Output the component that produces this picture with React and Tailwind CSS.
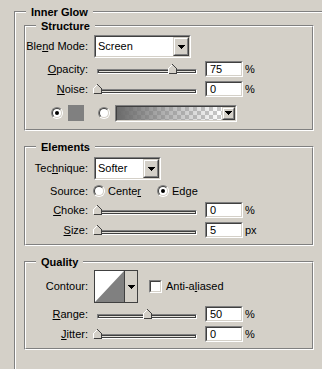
// Photoshop "Inner Glow" layer style panel (Win2000 look)

function Arrow() {
    return (
        <svg width="7" height="4" viewBox="0 0 7 4" shapeRendering="crispEdges">
            <rect x="0" y="0" width="7" height="1" fill="#000" />
            <rect x="1" y="1" width="5" height="1" fill="#000" />
            <rect x="2" y="2" width="3" height="1" fill="#000" />
            <rect x="3" y="3" width="1" height="1" fill="#000" />
        </svg>
    )
}

// sunken 3d field
function Sunken({ className, inner = 'bg-white', children }) {
    return (
        <div className={`border border-t-[#808080] border-l-[#808080] border-b-white border-r-white ${className}`}>
            <div className={`flex h-full w-full border border-t-[#404040] border-l-[#404040] border-b-[#d4d0c8] border-r-[#d4d0c8] ${inner}`}>
                {children}
            </div>
        </div>
    )
}

// raised dropdown button
function DropButton({ className }) {
    return (
        <div className={`border border-t-[#d4d0c8] border-l-[#d4d0c8] border-b-[#404040] border-r-[#404040] ${className}`}>
            <div className="flex h-full w-full items-center justify-center border border-t-white border-l-white border-b-[#808080] border-r-[#808080] bg-[#d4d0c8]">
                <Arrow />
            </div>
        </div>
    )
}

function Select({ value, width }) {
    return (
        <Sunken className={`h-[23px] ${width}`}>
            <div className="flex flex-1 items-center pl-[2px]">{value}</div>
            <DropButton className="h-full w-[16px]" />
        </Sunken>
    )
}

function Radio({ checked }) {
    return (
        <div className="h-[12px] w-[12px] shrink-0 rounded-full border border-t-[#808080] border-l-[#808080] border-b-white border-r-white">
            <div className="flex h-full w-full items-center justify-center rounded-full border border-t-[#404040] border-l-[#404040] border-b-[#d4d0c8] border-r-[#d4d0c8] bg-white">
                {checked && <div className="h-[4px] w-[4px] rounded-full bg-black" />}
            </div>
        </div>
    )
}

function Thumb() {
    return (
        <svg width="9" height="10" viewBox="0 0 9 10" shapeRendering="crispEdges">
            <polygon points="4.5,0.5 8.5,4.5 8.5,9.5 0.5,9.5 0.5,4.5" fill="#d4d0c8" />
            <polyline points="0.5,9 0.5,4.5 4.5,0.5" fill="none" stroke="#fff" />
            <polyline points="4.5,0.5 8.5,4.5 8.5,9.5 0.5,9.5" fill="none" stroke="#404040" />
        </svg>
    )
}

function Slider({ value }) {
    return (
        <div className="relative ml-[3px] h-[16px] w-[100px]">
            <div className="mt-[8px] h-[5px] border border-t-[#808080] border-l-[#808080] border-b-white border-r-white">
                <div className="h-full border border-t-[#404040] border-l-[#404040] border-b-[#404040] border-r-[#404040] bg-[#e4e2dc]" />
            </div>
            <div className="absolute top-[3px]" style={{ left: value - 4 }}>
                <Thumb />
            </div>
        </div>
    )
}

function Label({ children }) {
    return <div className="w-[62px] shrink-0 text-right">{children}</div>
}

function SliderRow({ label, value, slider, unit, className }) {
    return (
        <div className={`flex h-[16px] items-center ${className}`}>
            <Label>{label}</Label>
            <div className="ml-[6px] flex items-center">
                <Slider value={slider} />
                <Sunken className="ml-[8px] h-[16px] w-[38px]">
                    <div className="flex items-center pl-[3px]">{value}</div>
                </Sunken>
                <span className="ml-[2px]">{unit}</span>
            </div>
        </div>
    )
}

function Group({ title, className, children }) {
    return (
        <div className={`relative border border-t-[#808080] border-l-[#808080] border-b-white border-r-white ${className}`}>
            <div className="h-full w-full border border-t-white border-l-white border-b-[#808080] border-r-[#808080]">
                {children}
            </div>
            <span className="absolute left-[11px] top-[-6px] bg-[#d4d0c8] px-[5px] font-bold">{title}</span>
        </div>
    )
}

export default function App() {
    return (
        <div className="h-[369px] w-[322px] overflow-hidden bg-[#d4d0c8] font-['Liberation_Sans',Arial,sans-serif] text-[11px] leading-[13px] text-black">
            <div className="ml-[14px] mt-[11px] h-[400px] w-[340px] border-l border-t border-l-[#808080] border-t-[#808080]">
                <div className="relative h-full w-full border-l border-t border-l-white border-t-white">
                    <span className="absolute left-[10px] top-[-7px] bg-[#d4d0c8] px-[5px] font-bold">Inner Glow</span>

                    <div className="ml-[8px] pt-[12px]">

                        {/* Structure */}
                        <Group title="Structure" className="h-[106px] w-[290px]">
                            <div className="mt-[8px] flex items-center">
                                <Label>Ble<u>n</u>d Mode:</Label>
                                <div className="ml-[6px]">
                                    <Select value="Screen" width="w-[97px]" />
                                </div>
                            </div>
                            <SliderRow className="mt-[3px]" label={<><u>O</u>pacity:</>} value="75" slider={75} unit="%" />
                            <SliderRow className="mt-[4px]" label={<><u>N</u>oise:</>} value="0" slider={0} unit="%" />
                            <div className="mt-[8px] flex h-[16px] items-center">
                                <div className="ml-[25px]"><Radio checked /></div>
                                <div className="ml-[5px] h-[16px] w-[16px] bg-[#808080]" />
                                <div className="ml-[14px]"><Radio /></div>
                                <Sunken className="ml-[5px] h-[17px] w-[122px]">
                                    <div className="flex-1 bg-[conic-gradient(#c8c8c8_25%,#ffffff_0_50%,#c8c8c8_0_75%,#ffffff_0)] bg-[length:8px_8px]">
                                        <div className="h-full w-full bg-linear-to-r from-[#6a6a6a] via-[#8a8a8a]/60 to-transparent" />
                                    </div>
                                    <DropButton className="h-full w-[13px]" />
                                </Sunken>
                            </div>
                        </Group>

                        {/* Elements */}
                        <Group title="Elements" className="mt-[15px] h-[100px] w-[290px]">
                            <div className="mt-[9px] flex items-center">
                                <Label>Tec<u>h</u>nique:</Label>
                                <div className="ml-[6px]">
                                    <Select value="Softer" width="w-[67px]" />
                                </div>
                            </div>
                            <div className="mt-[3px] flex h-[16px] items-center">
                                <Label>Source:</Label>
                                <div className="ml-[5px] flex items-center">
                                    <Radio />
                                    <span className="ml-[3px]">Cente<u>r</u></span>
                                    <div className="ml-[16px]"><Radio checked /></div>
                                    <span className="ml-[3px]">Ed<u>g</u>e</span>
                                </div>
                            </div>
                            <SliderRow className="mt-[3px]" label={<><u>C</u>hoke:</>} value="0" slider={0} unit="%" />
                            <SliderRow className="mt-[4px]" label={<><u>S</u>ize:</>} value="5" slider={0} unit="px" />
                        </Group>

                        {/* Quality */}
                        <Group title="Quality" className="mt-[15px] h-[89px] w-[290px]">
                            <div className="mt-[7px] flex h-[33px] items-center">
                                <Label>Contour:</Label>
                                <div className="ml-[6px] flex h-[33px] w-[44px] border border-[#404040] bg-[#d4d0c8]">
                                    <div className="h-full w-[30px] border-r border-[#404040] bg-white">
                                        <svg width="29" height="31" viewBox="0 0 29 31">
                                            <polygon points="0,31 29,0 29,31" fill="#808080" />
                                        </svg>
                                    </div>
                                    <div className="flex flex-1 items-center justify-center">
                                        <Arrow />
                                    </div>
                                </div>
                                <Sunken className="ml-[11px] h-[13px] w-[13px]" />
                                <span className="ml-[4px]">Anti-a<u>l</u>iased</span>
                            </div>
                            <SliderRow className="mt-[3px]" label={<><u>R</u>ange:</>} value="50" slider={50} unit="%" />
                            <SliderRow className="mt-[4px]" label={<><u>J</u>itter:</>} value="0" slider={0} unit="%" />
                        </Group>

                    </div>
                </div>
            </div>
        </div>
    )
}
